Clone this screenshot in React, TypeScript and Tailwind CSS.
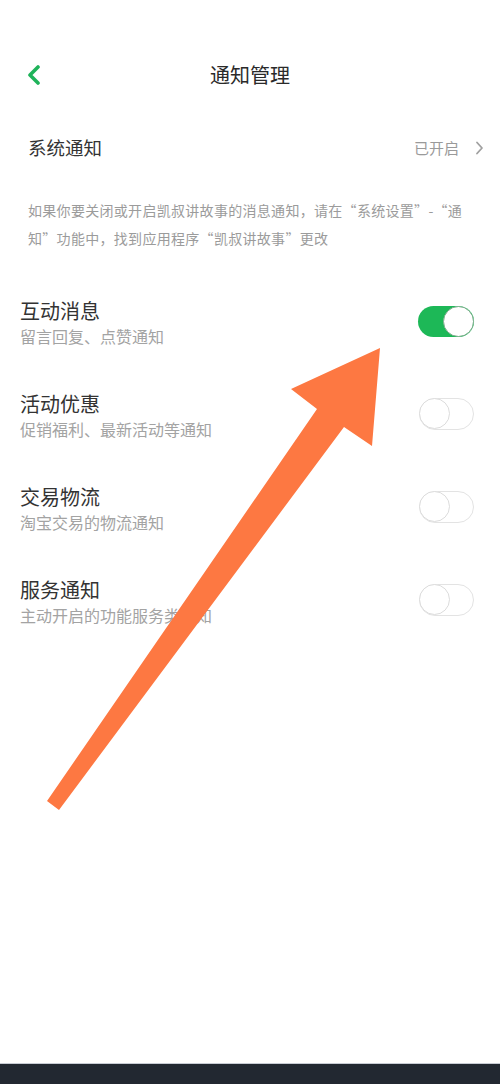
import React from "react";

const font = { fontFamily: '"Noto Sans CJK SC", "Noto Sans", sans-serif' };

function Toggle({ on }: { on: boolean }) {
  if (on) {
    return (
      <div className="relative w-[56px] h-[31px] rounded-full bg-[#1db857] shrink-0">
        <div className="absolute right-0 top-0 w-[31px] h-[31px] rounded-full bg-white border border-[#7fae8e]" />
      </div>
    );
  }
  return (
    <div className="relative w-[55px] h-[32px] rounded-full bg-white border-[1.5px] border-[#e3e3e3] shrink-0">
      <div className="absolute left-[-1px] top-[-1px] w-[31px] h-[31px] rounded-full bg-white border-[1.5px] border-[#dcdcdc]" />
    </div>
  );
}

const rows = [
  { t: "互动消息", s: "留言回复、点赞通知", on: true },
  { t: "活动优惠", s: "促销福利、最新活动等通知", on: false },
  { t: "交易物流", s: "淘宝交易的物流通知", on: false },
  { t: "服务通知", s: "主动开启的功能服务类通知", on: false },
];

export default function App() {
  return (
    <div className="relative w-[500px] h-[1084px] bg-white overflow-hidden flex flex-col" style={font}>
      <div className="h-[50px]" />
      <div className="h-[50px] relative flex items-center justify-center">
        <svg className="absolute left-[26px] top-[15px]" width="16" height="20" viewBox="0 0 16 20">
          <path d="M12 2 L4 10 L12 18" fill="none" stroke="#1fb35a" strokeWidth="3.6" strokeLinecap="round" strokeLinejoin="round" />
        </svg>
        <div className="text-[20px] text-[#2a2a2a] leading-none">通知管理</div>
      </div>
      <div className="mt-[20px] h-[56px] pl-[28px] pr-[16px] flex items-center justify-between">
        <div className="text-[18.5px] text-[#333]">系统通知</div>
        <div className="flex items-center gap-[16px]">
          <span className="text-[15px] text-[#9a9a9a]">已开启</span>
          <svg width="9" height="14" viewBox="0 0 9 14">
            <path d="M2 1.5 L7 7 L2 12.5" fill="none" stroke="#a0a0a0" strokeWidth="1.8" strokeLinecap="round" strokeLinejoin="round" />
          </svg>
        </div>
      </div>
      <div className="mt-[20px] px-[28px] text-[14px] tracking-[0.3px] leading-[28px] text-[#9b9b9b] whitespace-nowrap">
        如果你要关闭或开启凯叔讲故事的消息通知，请在“系统设置”-“通
        <br />
        知”功能中，找到应用程序“凯叔讲故事”更改
      </div>
      <div className="mt-[47px] flex flex-col gap-[43px] px-[20px]">
        {rows.map((r) => (
          <div key={r.t} className="h-[50px] flex items-center justify-between">
            <div className="flex flex-col">
              <div className="text-[20px] leading-[24px] text-[#333]">{r.t}</div>
              <div className="text-[16px] leading-[26px] text-[#a3a3a3]">{r.s}</div>
            </div>
            <div className="mr-[6px] -mt-[6px]">
              <Toggle on={r.on} />
            </div>
          </div>
        ))}
      </div>
      <div className="flex-1" />
      <div className="h-[21px] bg-[#222831] border-t border-[#c8ccd4]" />
      <svg className="absolute left-0 top-0 pointer-events-none" width="500" height="1084" viewBox="0 0 500 1084">
        <polygon
          points="380,348 372,446 344,427 59,810 47,801 317,409 291,389"
          fill="#fd7842"
        />
      </svg>
    </div>
  );
}
